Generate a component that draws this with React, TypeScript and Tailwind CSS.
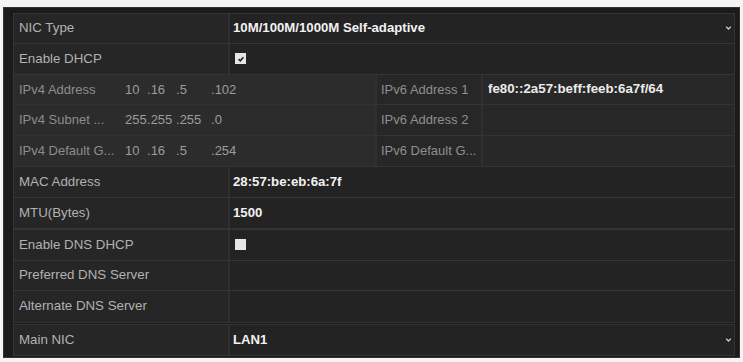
import React from "react";

const font = { fontFamily: '"Liberation Sans", Arial, sans-serif' };

function Chevron() {
  return (
    <svg width="7" height="6" viewBox="0 0 7 6" className="shrink-0">
      <path d="M1.2 1.8 L3.5 4 L5.8 1.8" stroke="#c4c4c4" strokeWidth="1.5" fill="none" />
    </svg>
  );
}

function Row({
  label,
  children,
  last,
  arrow,
}: {
  label: string;
  children?: React.ReactNode;
  last?: boolean;
  arrow?: boolean;
}) {
  return (
    <div className={`flex h-[30.5px] ${last ? "" : "border-b border-[#363636]"}`}>
      <div className="w-[216px] shrink-0 flex items-center pl-[5px] text-[13.3px] text-[#b2b2b2] bg-[#262626] border-r-[2px] border-[#303030] whitespace-nowrap">
        {label}
      </div>
      <div className="flex-1 flex items-center pl-[3px] pr-[2px] text-[13.2px] font-bold text-[#f2f2f2] bg-[#232323]">
        <div className="flex-1 flex items-center">{children}</div>
        {arrow && <Chevron />}
      </div>
    </div>
  );
}

function CheckBox({ checked }: { checked: boolean }) {
  return (
    <div className="w-[11px] h-[11px] ml-[2px] bg-[#e6e6e6] flex items-center justify-center">
      {checked && (
        <svg width="8" height="8" viewBox="0 0 8 8">
          <path d="M1.6 4.2 L3.3 5.8 L6.4 2.2" stroke="#222" strokeWidth="1.6" fill="none" />
        </svg>
      )}
    </div>
  );
}

function Ip({ parts }: { parts: string[] }) {
  return (
    <div className="flex items-center text-[13px] text-[#9c9c9c] whitespace-nowrap">
      <span className="w-[22px]">{parts[0]}</span>
      <span className="w-[29px]">.{parts[1]}</span>
      <span className="w-[35px]">.{parts[2]}</span>
      <span>.{parts[3]}</span>
    </div>
  );
}

function V4Row({ label, parts, last }: { label: string; parts?: string[]; last?: boolean }) {
  return (
    <div className={`flex h-[30.5px] items-center ${last ? "" : "border-b border-[#313131]"}`}>
      <div className="w-[111px] shrink-0 pl-[5px] text-[13px] text-[#8d8d8d] whitespace-nowrap">{label}</div>
      {parts && <Ip parts={parts} />}
    </div>
  );
}

function V6Row({ label, value, last }: { label: string; value?: string; last?: boolean }) {
  return (
    <div className={`flex h-[30.5px] ${last ? "" : "border-b border-[#343434]"}`}>
      <div className="w-[106px] shrink-0 flex items-center pl-[4px] text-[13px] text-[#8f8f8f] bg-[#272727] border-r-[2px] border-[#303030] whitespace-nowrap">
        {label}
      </div>
      <div className="flex-1 flex items-center pl-[5px] text-[13.3px] font-bold text-[#ececec] bg-[#282828] whitespace-nowrap">
        {value}
      </div>
    </div>
  );
}

export default function App() {
  return (
    <div className="w-[743px] h-[362px] bg-[#f4f4f4] overflow-hidden" style={font}>
      <div className="ml-[3px] mt-[7px] w-[737px] h-[351px] bg-[#1b1b1b] border border-[#333] pl-[10px] pt-[5.5px] flex flex-col">
        <div className="w-[720px] flex flex-col">
          <div className="bg-[#232323] ring-1 ring-[#343434]">
            <Row label="NIC Type" arrow>
              10M/100M/1000M Self-adaptive
            </Row>
            <Row label="Enable DHCP">
              <CheckBox checked />
            </Row>
          </div>
          <div className="flex border-b border-[#363636] ring-1 ring-[#343434]">
            <div className="w-[363px] shrink-0 bg-[#2c2c2c] flex flex-col border-r-[2px] border-[#303030]">
              <V4Row label="IPv4 Address" parts={["10", "16", "5", "102"]} />
              <V4Row label="IPv4 Subnet ..." parts={["255", "255", "255", "0"]} />
              <V4Row label="IPv4 Default G..." parts={["10", "16", "5", "254"]} last />
            </div>
            <div className="flex-1 flex flex-col">
              <V6Row label="IPv6 Address 1" value="fe80::2a57:beff:feeb:6a7f/64" />
              <V6Row label="IPv6 Address 2" />
              <V6Row label="IPv6 Default G..." last />
            </div>
          </div>
          <div className="bg-[#232323] ring-1 ring-[#343434]">
            <Row label="MAC Address">28:57:be:eb:6a:7f</Row>
            <Row label="MTU(Bytes)" last>
              1500
            </Row>
          </div>
          <div className="mt-[2px] bg-[#232323] ring-1 ring-[#343434]">
            <Row label="Enable DNS DHCP">
              <CheckBox checked={false} />
            </Row>
            <Row label="Preferred DNS Server" />
            <Row label="Alternate DNS Server" last />
          </div>
          <div className="mt-[3px] bg-[#232323] ring-1 ring-[#343434]">
            <Row label="Main NIC" arrow last>
              LAN1
            </Row>
          </div>
        </div>
      </div>
    </div>
  );
}
